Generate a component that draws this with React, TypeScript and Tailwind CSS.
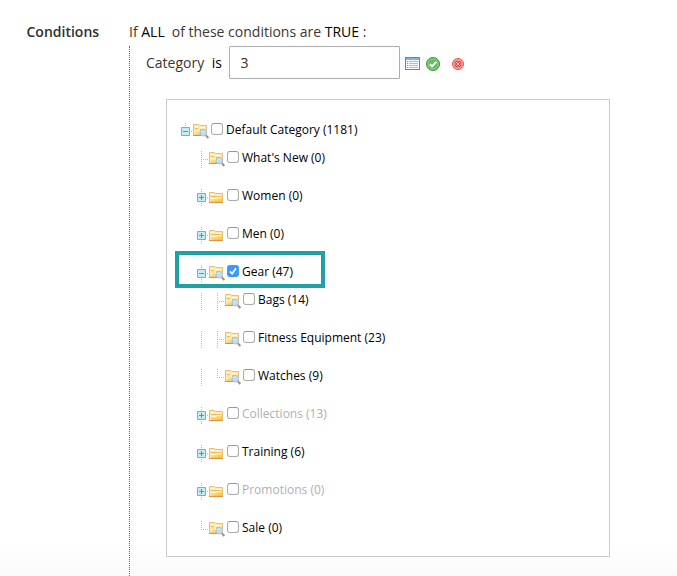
import React from 'react';

type Toggle = 'plus' | 'minus' | 'elbow' | 'elbow-end';

interface Category {
  id: number;
  name: string;
  count: number;
  depth: number;
  toggle: Toggle;
  leaf?: boolean;
  checked?: boolean;
  disabled?: boolean;
  highlighted?: boolean;
}

const categories: Category[] = [
  { id: 2, name: 'Default Category', count: 1181, depth: 0, toggle: 'minus', leaf: true },
  { id: 38, name: "What's New", count: 0, depth: 1, toggle: 'elbow', leaf: true },
  { id: 20, name: 'Women', count: 0, depth: 1, toggle: 'plus' },
  { id: 11, name: 'Men', count: 0, depth: 1, toggle: 'plus' },
  { id: 3, name: 'Gear', count: 47, depth: 1, toggle: 'minus', leaf: true, checked: true, highlighted: true },
  { id: 4, name: 'Bags', count: 14, depth: 2, toggle: 'elbow', leaf: true },
  { id: 5, name: 'Fitness Equipment', count: 23, depth: 2, toggle: 'elbow', leaf: true },
  { id: 6, name: 'Watches', count: 9, depth: 2, toggle: 'elbow-end', leaf: true },
  { id: 7, name: 'Collections', count: 13, depth: 1, toggle: 'plus', disabled: true },
  { id: 9, name: 'Training', count: 6, depth: 1, toggle: 'plus' },
  { id: 29, name: 'Promotions', count: 0, depth: 1, toggle: 'plus', disabled: true },
  { id: 37, name: 'Sale', count: 0, depth: 1, toggle: 'elbow-end', leaf: true },
];

function TreeLine({ toggle, isRoot }: { toggle: Toggle | 'line'; isRoot?: boolean }) {
  const bottom = toggle === 'elbow-end' ? 10 : isRoot ? 6 : 18;
  const hasBox = toggle === 'plus' || toggle === 'minus';

  return (
    <svg width="16" height="18" viewBox="0 0 16 18" shapeRendering="crispEdges" className="shrink-0">
      <path d={`M8.5 1V${bottom}`} stroke="#b8b8b8" strokeDasharray="1 1" fill="none" />
      {toggle !== 'line' && <path d="M10 9.5H16" stroke="#b8b8b8" strokeDasharray="1 1" fill="none" />}
      {hasBox && (
        <>
          <rect x="4" y="5" width="9" height="9" rx="1" fill="#56bdd0" shapeRendering="auto" />
          <rect x="5" y="6" width="7" height="7" fill="#c4edf6" />
          <rect x="6" y="9" width="5" height="1" fill="#35a5bb" />
          {toggle === 'plus' && <rect x="8" y="7" width="1" height="5" fill="#35a5bb" />}
        </>
      )}
    </svg>
  );
}

function FolderIcon({ leaf }: { leaf?: boolean }) {
  return (
    <svg width="16" height="18" viewBox="0 0 16 18" className="shrink-0 overflow-visible">
      <defs>
        <linearGradient id="folderFront" x1="0" y1="0" x2="0.6" y2="1">
          <stop offset="0" stopColor="#fff8d0" />
          <stop offset="0.4" stopColor="#fbdf83" />
          <stop offset="1" stopColor="#f6c544" />
        </linearGradient>
      </defs>
      {leaf ? (
        <>
          <path d="M0.5 13.5V2.5H5.5L6.5 3.5H13.5V13.5Z" fill="#fdeab0" stroke="#e6be76" />
          <path d="M2 4.5H5M7 5.5H12" stroke="#fffdf0" />
          <path d="M2 6.5H5M7 7.5H12" stroke="#efb95a" />
          <path d="M2 13V9.5H6L7.5 8.5H13V13Z" fill="url(#folderFront)" />
          <path d="M0 13.5H9" stroke="#dc9145" />
          <path d="M12.6 13.2L15.4 16" stroke="#c5824d" strokeWidth="1.9" />
          <circle cx="10.4" cy="10.7" r="3.3" fill="#c2dcf8" stroke="#a5c1e2" />
          <path d="M8.6 10.4C8.9 9.4 9.6 9 10.7 9" stroke="#e7f5ff" fill="none" />
        </>
      ) : (
        <>
          <path d="M0.5 14.5V4.5H5.5L6.5 5.5H13.5V14.5Z" fill="#fdeab0" stroke="#e6be76" />
          <path d="M2 6.5H5M7 7.5H12" stroke="#fffdf0" />
          <path d="M2 8.5H6L7 8.5H12" stroke="#efb95a" />
          <path d="M2 14V10.5H6.5L8 9H13V14Z" fill="url(#folderFront)" />
          <path d="M3 10.5H6.7L8.2 9.5H12" stroke="#fffbe0" fill="none" />
          <path d="M0 14.5H14" stroke="#dc9145" />
        </>
      )}
    </svg>
  );
}

function Checkbox({ checked }: { checked?: boolean }) {
  if (checked) {
    return (
      <span className="mb-1 ml-0.5 flex size-3 shrink-0 items-center justify-center rounded-[3px] bg-[#3b99fc]">
        <svg width="12" height="12" viewBox="0 0 12 12">
          <path d="M3 6.4L5.1 8.7L9 3.2" fill="none" stroke="#fff" strokeWidth="1.7" />
        </svg>
      </span>
    );
  }
  return (
    <span className="mb-1 ml-0.5 size-3 shrink-0 rounded-[3px] border border-[#acacac] border-t-[#989898] bg-white" />
  );
}

function CategoryRow({ category }: { category: Category }) {
  const { name, count, depth, toggle, leaf, checked, disabled, highlighted } = category;

  return (
    <li className={`relative flex h-[18px] items-center ${toggle === 'minus' ? 'mb-2.5' : 'mb-5'}`}>
      {depth > 0 && <span className="w-4 shrink-0" />}
      {depth > 1 && <TreeLine toggle="line" />}
      <TreeLine toggle={toggle} isRoot={depth === 0} />
      <FolderIcon leaf={leaf} />
      <Checkbox checked={checked} />
      <span className={`mb-[3px] ml-[3px] whitespace-nowrap ${disabled ? 'text-[#b0b0b0]' : 'text-black'}`}>
        {name} ({count})
      </span>
      {highlighted && (
        <span className="absolute -top-[13px] -left-[2px] h-[37px] w-[150px] border-4 border-[#1fa0a2]" />
      )}
    </li>
  );
}

function ListIcon() {
  return (
    <svg width="15" height="13" viewBox="0 0 15 13" shapeRendering="crispEdges">
      <rect width="15" height="13" fill="#5f86bd" />
      <rect x="1" y="1" width="13" height="2" fill="#82b0ee" />
      <rect x="1" y="3" width="13" height="9" fill="#f5f8fc" />
      <path d="M2 4.5H3M2 6.5H3M2 8.5H3M2 10.5H3" stroke="#6f9bd0" />
      <path d="M4 4.5H13M4 6.5H13M4 8.5H13M4 10.5H13" stroke="#b9bbbf" />
    </svg>
  );
}

function ApplyIcon() {
  return (
    <svg width="14" height="14" viewBox="0 0 14 14">
      <circle cx="7" cy="7" r="6.5" fill="#5ab558" stroke="#3f9442" />
      <circle cx="7" cy="7" r="5.2" fill="#62bc5f" stroke="#a2d99f" strokeWidth="0.8" />
      <path d="M3.9 7.2L6.2 9.4L10.2 4.9" fill="none" stroke="#fff" strokeWidth="2" />
    </svg>
  );
}

function RemoveIcon() {
  return (
    <svg width="12" height="12" viewBox="0 0 12 12">
      <circle cx="6" cy="6" r="5.5" fill="#f58a84" stroke="#ea5450" />
      <circle cx="6" cy="6" r="4.4" fill="none" stroke="#f9aaa4" strokeWidth="0.8" />
      <path d="M3.5 3.5L8.5 8.5M8.5 3.5L3.5 8.5" stroke="#d93438" strokeWidth="2.4" />
      <path d="M3.7 3.7L8.3 8.3M8.3 3.7L3.7 8.3" stroke="#ffdedb" strokeWidth="1" />
    </svg>
  );
}

export default function App() {
  return (
    <div className="flex h-[576px] w-[677px] overflow-hidden bg-linear-to-b from-white from-95% to-[#fafafa] font-['Open_Sans',sans-serif] text-sm text-[#41362f]">
      <div className="w-[129px] shrink-0 pt-[22px] pl-[26.5px] leading-5 font-semibold text-[#303030]">
        Conditions
      </div>

      <div className="flex flex-col pt-[22px]">
        <div className="flex h-6 leading-5 whitespace-pre">
          <span>If </span>
          <span className="text-black">ALL</span>
          <span className="ml-[7px]">of these conditions are </span>
          <span className="text-black">TRUE</span>
          <span> :</span>
        </div>

        <div className="flex-1 border-l border-dotted border-[#666] pl-4">
          <div className="flex h-[33px] items-center">
            <span>Category</span>
            <span className="ml-[7.5px] text-black">is</span>
            <div className="ml-[7.5px] flex h-[33px] w-[171px] items-center rounded-[1px] border border-[#adadad] bg-white pl-2.5 text-[#303030]">
              3
            </div>
            <div className="ml-[5px] flex items-center pt-0.5">
              <ListIcon />
              <span className="ml-1.5"><ApplyIcon /></span>
              <span className="ml-3"><RemoveIcon /></span>
            </div>
          </div>

          <ul className="mt-5 ml-5 h-[458px] w-[444px] border border-[#ccc] bg-white pt-[22px] pl-2.5 text-xs leading-4">
            {categories.map((category) => (
              <CategoryRow key={category.id} category={category} />
            ))}
          </ul>
        </div>
      </div>
    </div>
  );
}
